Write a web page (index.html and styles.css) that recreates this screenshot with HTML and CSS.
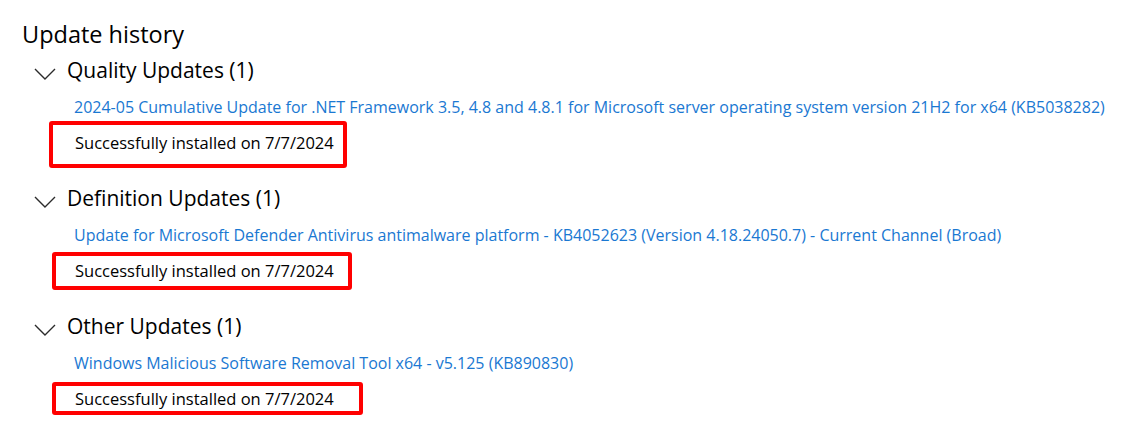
FILE: index.html
```html
<!DOCTYPE html>
<html lang="en">
<head>
<meta charset="utf-8">
<title>Update history</title>
<link rel="stylesheet" href="styles.css">
</head>
<body>
<main class="page">
  <h1 class="title">Update history</h1>

  <section class="group">
    <div class="group-head">
      <svg class="chevron" viewBox="0 0 22 12" aria-hidden="true"><polyline points="1,1 11,11 21,1"/></svg>
      <h2 class="group-title">Quality Updates (1)</h2>
    </div>
    <div class="item">
      <a class="item-link" href="#">2024-05 Cumulative Update for .NET Framework 3.5, 4.8 and 4.8.1 for Microsoft server operating system version 21H2 for x64 (KB5038282)</a>
      <div class="status">
        <span class="mark mark-1"></span>
        <span class="status-text">Successfully installed on 7/7/2024</span>
      </div>
    </div>
  </section>

  <section class="group">
    <div class="group-head">
      <svg class="chevron" viewBox="0 0 22 12" aria-hidden="true"><polyline points="1,1 11,11 21,1"/></svg>
      <h2 class="group-title">Definition Updates (1)</h2>
    </div>
    <div class="item">
      <a class="item-link" href="#">Update for Microsoft Defender Antivirus antimalware platform - KB4052623 (Version 4.18.24050.7) - Current Channel (Broad)</a>
      <div class="status">
        <span class="mark mark-2"></span>
        <span class="status-text">Successfully installed on 7/7/2024</span>
      </div>
    </div>
  </section>

  <section class="group">
    <div class="group-head">
      <svg class="chevron" viewBox="0 0 22 12" aria-hidden="true"><polyline points="1,1 11,11 21,1"/></svg>
      <h2 class="group-title">Other Updates (1)</h2>
    </div>
    <div class="item">
      <a class="item-link" href="#">Windows Malicious Software Removal Tool x64 - v5.125 (KB890830)</a>
      <div class="status">
        <span class="mark mark-3"></span>
        <span class="status-text">Successfully installed on 7/7/2024</span>
      </div>
    </div>
  </section>
</main>
</body>
</html>
```

FILE: styles.css
```css
* { box-sizing: border-box; }

html, body {
  margin: 0;
  padding: 0;
  background: #ffffff;
}

body {
  font-family: "Open Sans", "Noto Sans", "Liberation Sans", sans-serif;
  color: #000000;
  width: 1147px;
  height: 430px;
  overflow: hidden;
}

.page {
  padding: 18px 0 0 22px;
  display: flex;
  flex-direction: column;
}

.title {
  margin: 0;
  font-size: 23.5px;
  font-weight: 400;
  line-height: 32px;
}

.group {
  display: flex;
  flex-direction: column;
}

.group + .group {
  margin-top: 18px;
}

.group-head {
  display: flex;
  align-items: center;
  gap: 11px;
  margin-left: 12px;
  height: 40px;
}

.chevron {
  width: 22px;
  height: 12px;
  margin-top: 8px;
  fill: none;
  stroke: #2b2b2b;
  stroke-width: 1.4;
  stroke-linejoin: miter;
}

.group-title {
  margin: 0;
  font-size: 21px;
  font-weight: 400;
  line-height: 28px;
}

.item {
  margin-left: 52px;
  display: flex;
  flex-direction: column;
}

.item-link {
  display: block;
  color: #1a78d2;
  text-decoration: none;
  font-size: 16px;
  line-height: 35px;
  white-space: nowrap;
}

.status {
  position: relative;
  height: 35px;
  display: flex;
  align-items: center;
}

.status-text {
  position: relative;
  font-size: 16.5px;
  line-height: 22px;
  padding-left: 1px;
}

.mark {
  position: absolute;
  border: 4px solid #ff0000;
  border-radius: 3px;
}

.mark-1 { left: -25px; top: -4px; width: 298px; height: 47px; }
.mark-2 { left: -22px; top: -1px; width: 300px; height: 38px; }
.mark-3 { left: -22px; top: 1px; width: 311px; height: 33px; }
```
